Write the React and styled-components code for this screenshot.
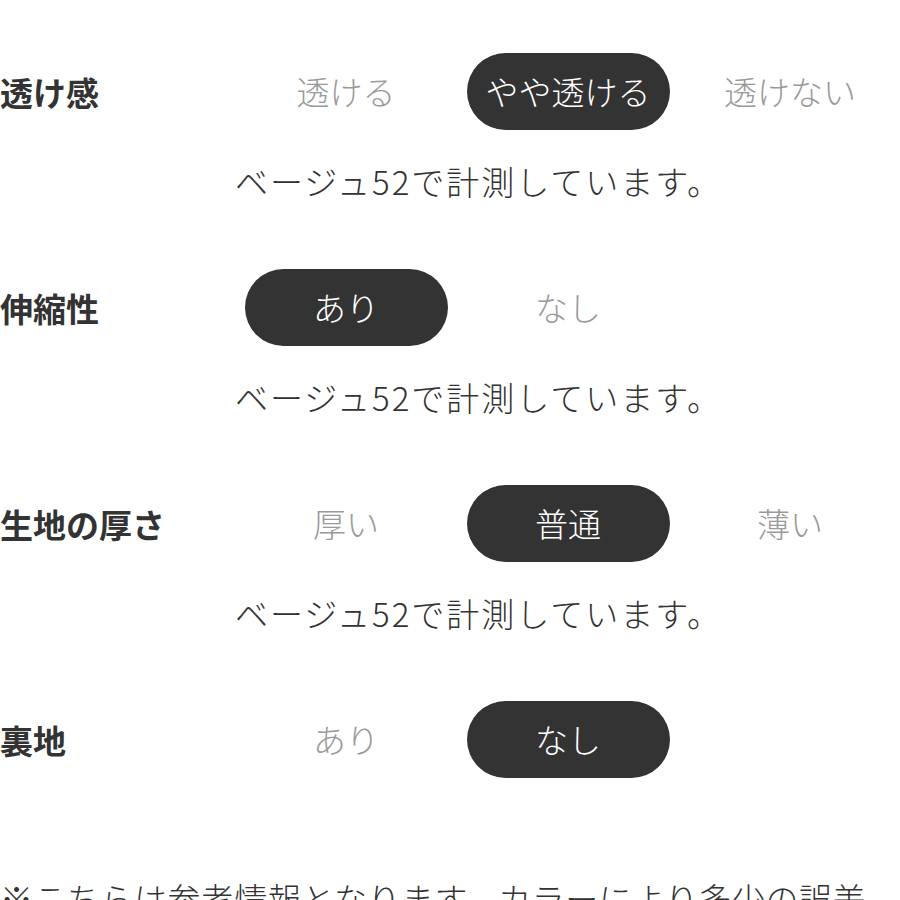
import React from 'react';
import styled, { createGlobalStyle } from 'styled-components';

const GlobalStyle = createGlobalStyle`
  html, body {
    margin: 0;
    padding: 0;
    background: #fff;
  }
  body {
    font-family: "Noto Sans CJK JP", "Noto Sans", sans-serif;
    color: #333;
  }
`;

// 素材の詳細スペック
const specs = [
  {
    label: '透け感',
    options: ['透ける', 'やや透ける', '透けない'],
    selected: 1,
    note: 'ベージュ52で計測しています。',
  },
  {
    label: '伸縮性',
    options: ['あり', 'なし'],
    selected: 0,
    note: 'ベージュ52で計測しています。',
  },
  {
    label: '生地の厚さ',
    options: ['厚い', '普通', '薄い'],
    selected: 1,
    note: 'ベージュ52で計測しています。',
  },
  {
    label: '裏地',
    options: ['あり', 'なし'],
    selected: 1,
  },
];

export default function App() {
  return (
    <Page>
      <GlobalStyle />
      <SpecList>
        {specs.map((spec) => (
          <SpecRow key={spec.label}>
            <Label>{spec.label}</Label>
            <Options>
              {spec.options.map((opt, i) => (
                <Option key={opt}>
                  <Pill active={i === spec.selected}>{opt}</Pill>
                </Option>
              ))}
            </Options>
            {spec.note && <Note>{spec.note}</Note>}
          </SpecRow>
        ))}
      </SpecList>
      <Caution>※こちらは参考情報となります。カラーにより多少の誤差が生じる場合がございます。</Caution>
    </Page>
  );
}

const Page = styled.div`
  width: 900px;
  height: 900px;
  overflow: hidden;
  padding-top: 53px;
  box-sizing: border-box;
`;

const SpecList = styled.div`
  display: flex;
  flex-direction: column;
  gap: 68px;
`;

const SpecRow = styled.div`
  display: grid;
  grid-template-columns: 235px 1fr;
  align-items: center;
`;

const Label = styled.div`
  font-size: 33px;
  font-weight: 700;
  color: #333;
  white-space: nowrap;
`;

const Options = styled.div`
  display: grid;
  grid-template-columns: repeat(3, 222px);
`;

const Option = styled.div`
  display: flex;
  justify-content: center;
`;

const Pill = styled.div`
  width: 203px;
  height: 77px;
  border-radius: 39px;
  display: flex;
  align-items: center;
  justify-content: center;
  font-size: 33px;
  font-weight: 300;
  line-height: 1;
  white-space: nowrap;
  background: ${(p) => (p.active ? '#333' : 'transparent')};
  color: ${(p) => (p.active ? '#fff' : '#9a9a9a')};
`;

const Note = styled.div`
  grid-column: 2;
  margin-top: 31px;
  font-size: 33px;
  font-weight: 300;
  line-height: 40px;
  letter-spacing: 2px;
  color: #333;
  white-space: nowrap;
`;

const Caution = styled.div`
  width: 880px;
  margin-top: 98px;
  font-size: 33px;
  font-weight: 300;
  line-height: 44px;
  letter-spacing: 0.5px;
  color: #333;
`;
